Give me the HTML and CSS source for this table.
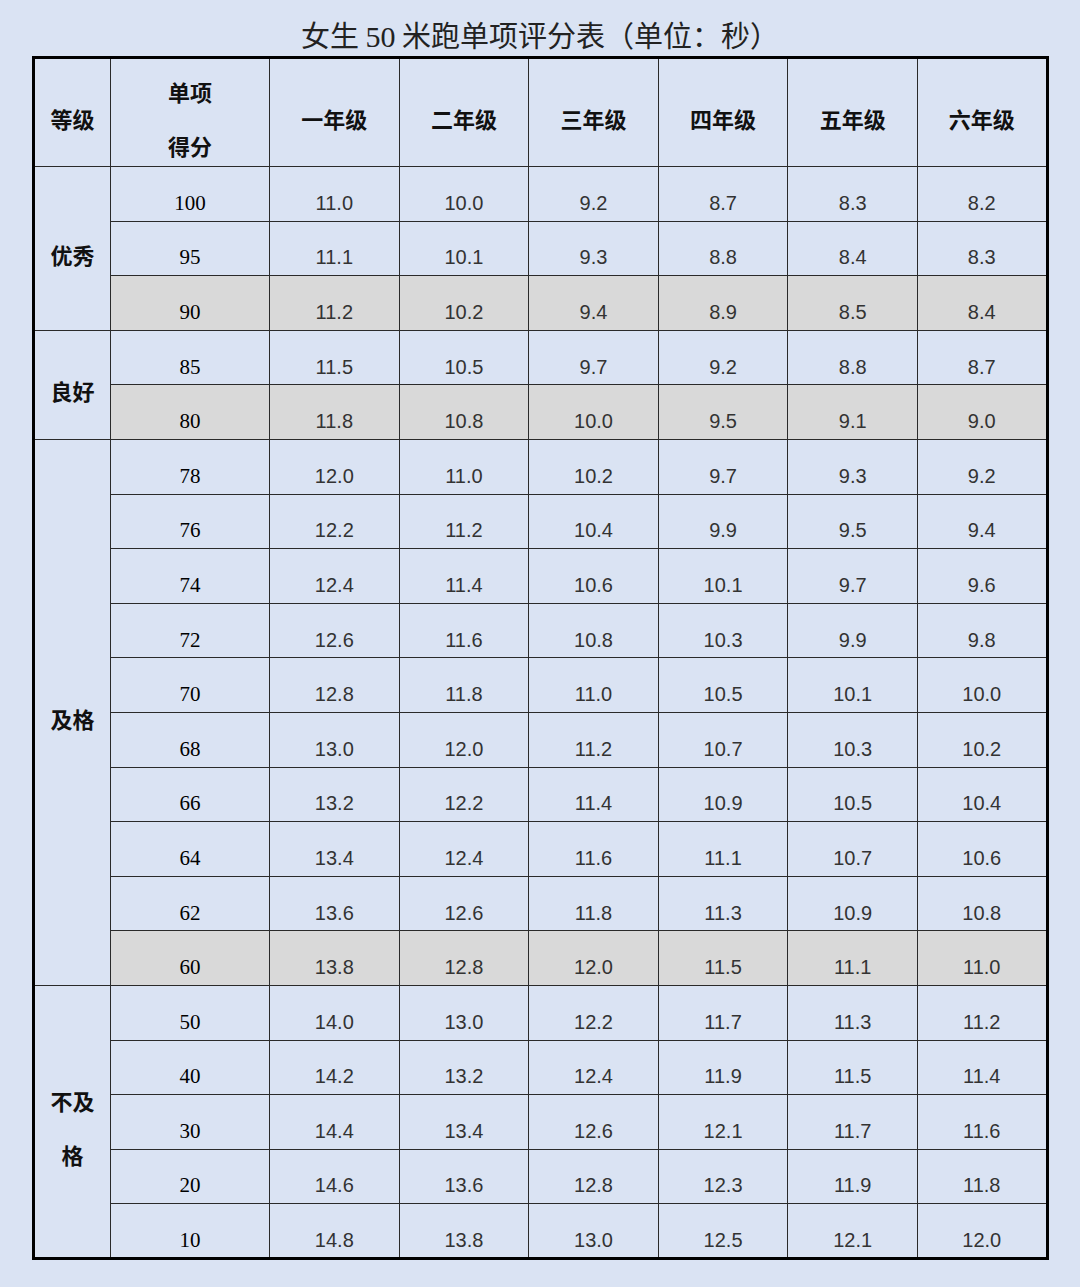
FILE: index.html
```html
<!DOCTYPE html>
<html lang="zh">
<head>
<meta charset="utf-8">
<title>女生50米跑单项评分表</title>
<link rel="stylesheet" href="styles.css">
</head>
<body>
<div class="page">
  <h1 class="title">女生 <span class="num">50</span> 米跑单项评分表（单位：秒）</h1>
  <table class="score">
    <colgroup>
      <col class="c-level"><col class="c-score">
      <col class="c-g"><col class="c-g"><col class="c-g"><col class="c-g"><col class="c-g"><col class="c-g">
    </colgroup>
    <thead>
      <tr class="head">
        <th>等级</th>
        <th class="two"><div class="stack">单项<br>得分</div></th>
        <th>一年级</th><th>二年级</th><th>三年级</th><th>四年级</th><th>五年级</th><th>六年级</th>
      </tr>
    </thead>
    <tbody>
      <tr><th class="level" rowspan="3">优秀</th><td class="pt">100</td><td>11.0</td><td>10.0</td><td>9.2</td><td>8.7</td><td>8.3</td><td>8.2</td></tr>
      <tr><td class="pt">95</td><td>11.1</td><td>10.1</td><td>9.3</td><td>8.8</td><td>8.4</td><td>8.3</td></tr>
      <tr class="gray"><td class="pt">90</td><td>11.2</td><td>10.2</td><td>9.4</td><td>8.9</td><td>8.5</td><td>8.4</td></tr>
      <tr><th class="level" rowspan="2">良好</th><td class="pt">85</td><td>11.5</td><td>10.5</td><td>9.7</td><td>9.2</td><td>8.8</td><td>8.7</td></tr>
      <tr class="gray"><td class="pt">80</td><td>11.8</td><td>10.8</td><td>10.0</td><td>9.5</td><td>9.1</td><td>9.0</td></tr>
      <tr><th class="level" rowspan="10">及格</th><td class="pt">78</td><td>12.0</td><td>11.0</td><td>10.2</td><td>9.7</td><td>9.3</td><td>9.2</td></tr>
      <tr><td class="pt">76</td><td>12.2</td><td>11.2</td><td>10.4</td><td>9.9</td><td>9.5</td><td>9.4</td></tr>
      <tr><td class="pt">74</td><td>12.4</td><td>11.4</td><td>10.6</td><td>10.1</td><td>9.7</td><td>9.6</td></tr>
      <tr><td class="pt">72</td><td>12.6</td><td>11.6</td><td>10.8</td><td>10.3</td><td>9.9</td><td>9.8</td></tr>
      <tr><td class="pt">70</td><td>12.8</td><td>11.8</td><td>11.0</td><td>10.5</td><td>10.1</td><td>10.0</td></tr>
      <tr><td class="pt">68</td><td>13.0</td><td>12.0</td><td>11.2</td><td>10.7</td><td>10.3</td><td>10.2</td></tr>
      <tr><td class="pt">66</td><td>13.2</td><td>12.2</td><td>11.4</td><td>10.9</td><td>10.5</td><td>10.4</td></tr>
      <tr><td class="pt">64</td><td>13.4</td><td>12.4</td><td>11.6</td><td>11.1</td><td>10.7</td><td>10.6</td></tr>
      <tr><td class="pt">62</td><td>13.6</td><td>12.6</td><td>11.8</td><td>11.3</td><td>10.9</td><td>10.8</td></tr>
      <tr class="gray"><td class="pt">60</td><td>13.8</td><td>12.8</td><td>12.0</td><td>11.5</td><td>11.1</td><td>11.0</td></tr>
      <tr><th class="level two" rowspan="5">不及<br>格</th><td class="pt">50</td><td>14.0</td><td>13.0</td><td>12.2</td><td>11.7</td><td>11.3</td><td>11.2</td></tr>
      <tr><td class="pt">40</td><td>14.2</td><td>13.2</td><td>12.4</td><td>11.9</td><td>11.5</td><td>11.4</td></tr>
      <tr><td class="pt">30</td><td>14.4</td><td>13.4</td><td>12.6</td><td>12.1</td><td>11.7</td><td>11.6</td></tr>
      <tr><td class="pt">20</td><td>14.6</td><td>13.6</td><td>12.8</td><td>12.3</td><td>11.9</td><td>11.8</td></tr>
      <tr><td class="pt">10</td><td>14.8</td><td>13.8</td><td>13.0</td><td>12.5</td><td>12.1</td><td>12.0</td></tr>
    </tbody>
  </table>
</div>
</body>
</html>
```
FILE: styles.css
```css
html, body {
  margin: 0;
  padding: 0;
  background: #dae3f3;
}
.page {
  width: 1080px;
  height: 1287px;
  padding: 0 0 0 32px;
  box-sizing: border-box;
}
.title {
  margin: 0;
  height: 56px;
  box-sizing: border-box;
  padding-top: 15px;
  padding-right: 32px;
  text-align: center;
  font-family: "Noto Sans CJK SC", sans-serif;
  font-weight: 400;
  font-size: 29px;
  line-height: 38px;
  color: #222;
}
.title .num {
  font-family: "Liberation Serif", serif;
  font-size: 30px;
}
.score {
  width: 1014px;
  border-collapse: collapse;
  border: 3px solid #000;
  table-layout: fixed;
}
.c-level { width: 77px; }
.c-score { width: 159px; }
.c-g { width: 129.6px; }
.score th, .score td {
  border: 1px solid #2a2a2a;
  padding: 18px 0 0 0;
  text-align: center;
  vertical-align: middle;
}
.score tbody tr { height: 54.6px; }
.score .head { height: 109px; }
.score .head th {
  vertical-align: top;
  padding-top: 44px;
}
.score .head th.two { padding-top: 5px; }
.stack {
  line-height: 54px;
  margin-bottom: -12px;
}
.score th {
  font-family: "Noto Sans CJK SC", sans-serif;
  font-weight: 700;
  font-size: 22px;
  color: #111;
  line-height: 30px;
}
.score th.level { padding-top: 11px; }
.score th.level.two { line-height: 54px; padding-top: 11px; }
.score td {
  font-family: "Liberation Sans", Arial, sans-serif;
  font-size: 20px;
  color: #333;
  line-height: 28px;
}
.score td.pt {
  font-family: "Liberation Serif", serif;
  font-size: 21px;
  color: #000;
}
.score tr.gray td { background: #d9d9d9; }
```
